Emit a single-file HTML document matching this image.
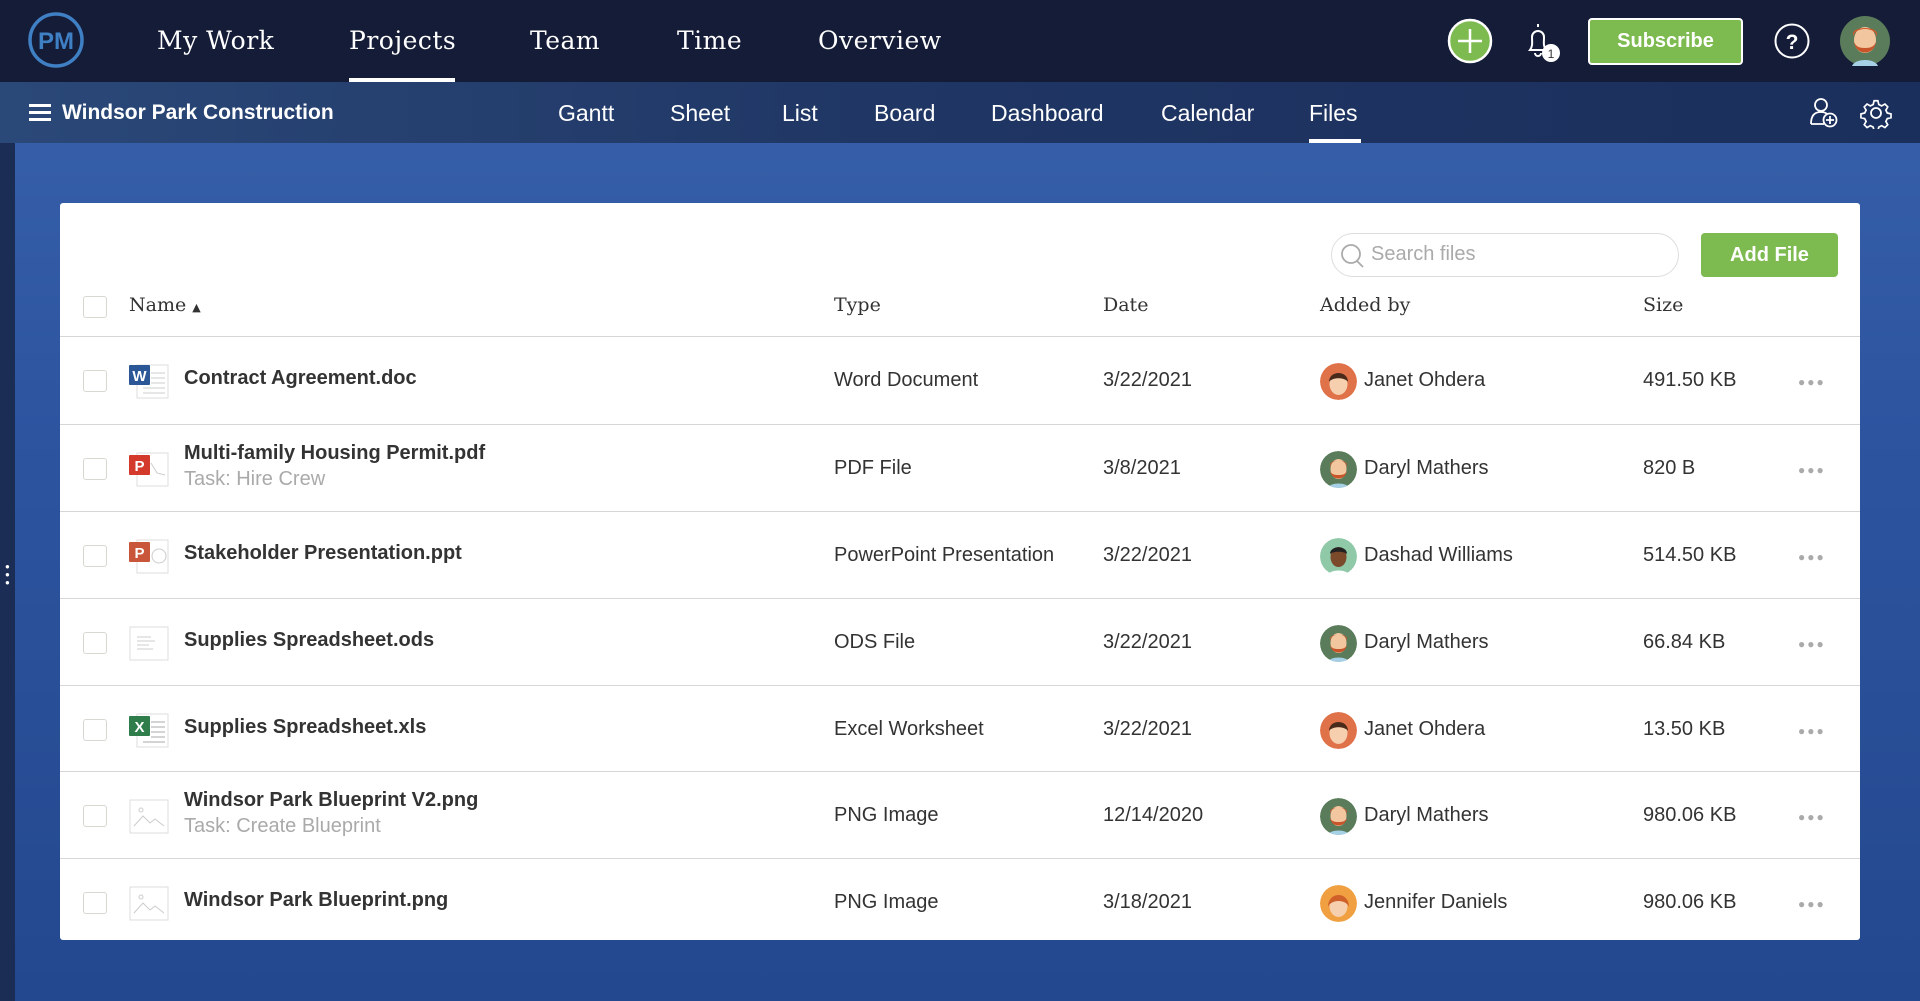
<!DOCTYPE html>
<html><head><meta charset="utf-8"><style>
*{margin:0;padding:0;box-sizing:border-box}
body{width:1920px;height:1001px;overflow:hidden;font-family:"Liberation Sans",sans-serif;background:linear-gradient(180deg,#3b64ad 0%,#2d55a0 40%,#24488f 100%);position:relative}
.top{position:absolute;left:0;top:0;width:1920px;height:82px;background:#141c37}
.sub{position:absolute;left:0;top:82px;width:1920px;height:61px;background:linear-gradient(90deg,#2a4878,#1f3563 50%,#1b2f5c)}
.nav{position:absolute;top:26px;color:#fff;font-family:"DejaVu Serif","Liberation Serif",serif;font-size:25px;letter-spacing:.5px}
.sn{position:absolute;top:100px;color:#fff;font-size:23px}
.card{position:absolute;left:60px;top:203px;width:1800px;height:737px;background:#fff;border-radius:3px}
.hd{position:absolute;top:294px;font-family:"DejaVu Serif","Liberation Serif",serif;font-size:19px;color:#333}
.row{position:absolute;left:60px;width:1800px;height:87px;border-top:1px solid #d6d6d6}
.row div,.row svg{position:absolute}
.cb{left:23px;top:33px;width:24px;height:22px;border:1.5px solid #d8d8d0;border-radius:3px;background:#fff}
.ic{left:69px;top:26px;width:40px;height:36px}
.nm{left:124px;font-weight:bold;font-size:20px;color:#333}
.tk{left:124px;top:50px;font-size:20px;color:#aaa}
.c{font-size:20px;color:#333;top:32px}
.av{left:1260px;top:26px;width:37px;height:37px;border-radius:50%}
.dots{left:1738px;top:38px;color:#aaa;font-size:12px;letter-spacing:2px}
</style></head><body>
<div style="position:absolute;left:0;top:143px;width:15px;height:858px;background:#1b2d55"></div>
<div style="position:absolute;left:5px;top:563px;color:#fff;font-size:8px;line-height:8px">●<br>●<br>●</div>
<div class="top"></div>
<div class="sub"></div>
<svg style="position:absolute;left:27px;top:11px" width="58" height="58"><circle cx="29" cy="29" r="26" fill="none" stroke="#3f7fc4" stroke-width="3.5"/><text x="29" y="38" text-anchor="middle" fill="#3f7fc4" font-family="Liberation Sans" font-weight="bold" font-size="24">PM</text></svg>
<div class="nav" style="left:157px">My Work</div>
<div class="nav" style="left:349px">Projects</div>
<div style="position:absolute;left:349px;top:78px;width:106px;height:4px;background:#fff"></div>
<div class="nav" style="left:530px">Team</div>
<div class="nav" style="left:677px">Time</div>
<div class="nav" style="left:818px">Overview</div>
<svg style="position:absolute;left:1447px;top:18px" width="46" height="46"><circle cx="23" cy="23" r="21" fill="#7dba50" stroke="#fff" stroke-width="2.5"/><path d="M23 11v24M11 23h24" stroke="#fff" stroke-width="2.5"/></svg>
<svg style="position:absolute;left:1520px;top:20px" width="44" height="46"><path d="M18 4v3M10 30c3-4 2-8 2-13a6 6 0 0 1 12 0c0 5-1 9 2 13zM15 33a3 3 0 0 0 6 0" fill="none" stroke="#fff" stroke-width="2"/><circle cx="31" cy="33" r="9" fill="#fff"/><text x="31" y="38" text-anchor="middle" font-size="12" fill="#333" font-family="Liberation Sans">1</text></svg>
<div style="position:absolute;left:1588px;top:18px;width:155px;height:47px;background:#7dba50;border:2.5px solid #fff;border-radius:4px;color:#fff;font-weight:bold;font-size:20px;text-align:center;line-height:42px">Subscribe</div>
<svg style="position:absolute;left:1773px;top:22px" width="38" height="38"><circle cx="19" cy="19" r="16.5" fill="none" stroke="#fff" stroke-width="2"/><text x="19" y="27" text-anchor="middle" fill="#fff" font-weight="bold" font-size="21" font-family="Liberation Sans">?</text></svg>
<svg style="position:absolute;left:1840px;top:16px" width="50" height="50"><circle cx="25" cy="25" r="25" fill="#5a7c5a"/><ellipse cx="25" cy="24" rx="11" ry="13" fill="#f2c7a0"/><path d="M13 22c0-12 24-12 24 0v-4c0-8-24-8-24 0z" fill="#d05a2c"/><path d="M14 26c2 14 20 14 22 0c-2 4-4 6-11 6s-9-2-11-6z" fill="#c8552a"/><path d="M12 50c3-8 23-8 26 0z" fill="#a6d0e6"/></svg>
<div style="position:absolute;left:29px;top:104px;width:22px;height:17px;border-top:3px solid #fff;border-bottom:3px solid #fff"><div style="margin-top:4px;height:3px;background:#fff"></div></div>
<div style="position:absolute;left:62px;top:101px;color:#fff;font-weight:bold;font-size:21px">Windsor Park Construction</div>
<div class="sn" style="left:558px">Gantt</div>
<div class="sn" style="left:670px">Sheet</div>
<div class="sn" style="left:782px">List</div>
<div class="sn" style="left:874px">Board</div>
<div class="sn" style="left:991px">Dashboard</div>
<div class="sn" style="left:1161px">Calendar</div>
<div class="sn" style="left:1309px">Files</div>
<div style="position:absolute;left:1309px;top:139px;width:52px;height:4px;background:#fff"></div>
<svg style="position:absolute;left:1808px;top:96px" width="32" height="34"><circle cx="13" cy="9" r="6" fill="none" stroke="#fff" stroke-width="1.8"/><path d="M3 28c0-8 3-12 10-12 3 0 5 1 6 2M3 28h13" fill="none" stroke="#fff" stroke-width="1.8"/><circle cx="22" cy="24" r="6.5" fill="none" stroke="#fff" stroke-width="1.8"/><path d="M22 20v8M18 24h8" stroke="#fff" stroke-width="1.8"/></svg>
<svg style="position:absolute;left:1860px;top:97px" width="32" height="32"><g fill="none" stroke="#fff" stroke-width="1.8"><circle cx="16" cy="16" r="5"/><path d="M14 3h4l1 4 3 1.5 3.5-2 3 3-2 3.5 1.5 3 4 1v4l-4 1-1.5 3 2 3.5-3 3-3.5-2-3 1.5-1 4h-4l-1-4-3-1.5-3.5 2-3-3 2-3.5-1.5-3-4-1v-4l4-1 1.5-3-2-3.5 3-3 3.5 2 3-1.5z" transform="scale(.94) translate(1 1)"/></g></svg>

<div class="card"></div>
<div style="position:absolute;left:1331px;top:233px;width:348px;height:44px;border:1.5px solid #ddd;border-radius:22px"></div>
<svg style="position:absolute;left:1339px;top:242px" width="28" height="28"><circle cx="12" cy="12" r="9" fill="none" stroke="#aaa" stroke-width="1.8"/><path d="M18 19l6 6" stroke="#aaa" stroke-width="1.8"/></svg>
<div style="position:absolute;left:1371px;top:243px;font-size:20px;color:#aaa">Search files</div>
<div style="position:absolute;left:1701px;top:233px;width:137px;height:44px;background:#7dba50;border-radius:4px;color:#fff;font-weight:bold;font-size:20px;text-align:center;line-height:44px">Add File</div>
<div class="cb" style="position:absolute;left:83px;top:296px"></div>
<div class="hd" style="left:129px">Name <span style="font-size:11px">▲</span></div>
<div class="hd" style="left:834px">Type</div>
<div class="hd" style="left:1103px">Date</div>
<div class="hd" style="left:1320px">Added by</div>
<div class="hd" style="left:1643px">Size</div>

<div class="row" style="top:336px"><div class="cb"></div>
<svg class="ic" viewBox="0 0 40 36"><rect x="8" y="2" width="31" height="33" fill="#fff" stroke="#ddd"/><path d="M22 10h14M22 15h14M22 20h14M14 25h22M14 30h22" stroke="#ccc"/><rect x="0" y="2" width="21" height="20" rx="1" fill="#2b5797"/><text x="10.5" y="18" text-anchor="middle" fill="#fff" font-weight="bold" font-size="15" font-family="Liberation Sans">W</text></svg>
<div class="nm" style="top:30px">Contract Agreement.doc</div><div class="c" style="left:774px">Word Document</div><div class="c" style="left:1043px">3/22/2021</div>
<svg class="av" viewBox="0 0 37 37"><circle cx="18.5" cy="18.5" r="18.5" fill="#e0724a"/><ellipse cx="18.5" cy="21" rx="9" ry="11" fill="#f5cfae"/><path d="M9 19c0-12 19-12 19 0c-3-5-16-5-19 0z" fill="#4a2a1a"/></svg>
<div class="c" style="left:1304px">Janet Ohdera</div><div class="c" style="left:1583px">491.50 KB</div><div class="dots">●●●</div></div>

<div class="row" style="top:424px"><div class="cb"></div>
<svg class="ic" viewBox="0 0 40 36"><rect x="8" y="2" width="31" height="33" fill="#fff" stroke="#ddd"/><path d="M22 12l6 10 8 2" stroke="#ccc" fill="none"/><rect x="0" y="4" width="21" height="20" rx="1" fill="#d33a2c"/><text x="10.5" y="20" text-anchor="middle" fill="#fff" font-weight="bold" font-size="15" font-family="Liberation Sans">P</text></svg>
<div class="nm" style="top:17px">Multi-family Housing Permit.pdf</div><div class="tk" style="top:43px">Task: Hire Crew</div><div class="c" style="left:774px">PDF File</div><div class="c" style="left:1043px">3/8/2021</div>
<svg class="av" viewBox="0 0 37 37"><circle cx="18.5" cy="18.5" r="18.5" fill="#5a7c5a"/><ellipse cx="18.5" cy="18" rx="8" ry="10" fill="#f2c7a0"/><path d="M10 17c0-10 17-10 17 0v-3c0-6-17-6-17 0z" fill="#d05a2c"/><path d="M10 20c2 10 15 10 17 0c-2 3-3 4-8.5 4s-6.5-1-8.5-4z" fill="#c8552a"/><path d="M8 37c2-6 19-6 21 0z" fill="#a6d0e6"/></svg>
<div class="c" style="left:1304px">Daryl Mathers</div><div class="c" style="left:1583px">820 B</div><div class="dots">●●●</div></div>

<div class="row" style="top:511px"><div class="cb"></div>
<svg class="ic" viewBox="0 0 40 36"><rect x="8" y="2" width="31" height="33" fill="#fff" stroke="#ddd"/><circle cx="30" cy="18" r="7" fill="none" stroke="#ccc"/><rect x="0" y="4" width="21" height="20" rx="1" fill="#c9553a"/><text x="10.5" y="20" text-anchor="middle" fill="#fff" font-weight="bold" font-size="15" font-family="Liberation Sans">P</text></svg>
<div class="nm" style="top:30px">Stakeholder Presentation.ppt</div><div class="c" style="left:774px">PowerPoint Presentation</div><div class="c" style="left:1043px">3/22/2021</div>
<svg class="av" viewBox="0 0 37 37"><circle cx="18.5" cy="18.5" r="18.5" fill="#8fc9a8"/><ellipse cx="18.5" cy="19" rx="8" ry="10" fill="#7a4a2a"/><path d="M10 16c0-9 17-9 17 0c-3-3-14-3-17 0z" fill="#222"/><path d="M8 37c2-6 19-6 21 0z" fill="#fff"/></svg>
<div class="c" style="left:1304px">Dashad Williams</div><div class="c" style="left:1583px">514.50 KB</div><div class="dots">●●●</div></div>

<div class="row" style="top:598px"><div class="cb"></div>
<svg class="ic" viewBox="0 0 40 36"><rect x="1" y="2" width="38" height="33" fill="#fff" stroke="#ddd"/><path d="M8 12h14M8 16h18M8 20h12M8 24h16" stroke="#ccc"/></svg>
<div class="nm" style="top:30px">Supplies Spreadsheet.ods</div><div class="c" style="left:774px">ODS File</div><div class="c" style="left:1043px">3/22/2021</div>
<svg class="av" viewBox="0 0 37 37"><circle cx="18.5" cy="18.5" r="18.5" fill="#5a7c5a"/><ellipse cx="18.5" cy="18" rx="8" ry="10" fill="#f2c7a0"/><path d="M10 17c0-10 17-10 17 0v-3c0-6-17-6-17 0z" fill="#d05a2c"/><path d="M10 20c2 10 15 10 17 0c-2 3-3 4-8.5 4s-6.5-1-8.5-4z" fill="#c8552a"/><path d="M8 37c2-6 19-6 21 0z" fill="#a6d0e6"/></svg>
<div class="c" style="left:1304px">Daryl Mathers</div><div class="c" style="left:1583px">66.84 KB</div><div class="dots">●●●</div></div>

<div class="row" style="top:685px"><div class="cb"></div>
<svg class="ic" viewBox="0 0 40 36"><rect x="8" y="2" width="31" height="33" fill="#fff" stroke="#ddd"/><path d="M22 10h14M22 15h14M22 20h14M22 25h14M14 30h22" stroke="#aaa"/><rect x="0" y="4" width="21" height="20" rx="1" fill="#2e7d4a"/><text x="10.5" y="20" text-anchor="middle" fill="#fff" font-weight="bold" font-size="15" font-family="Liberation Sans">X</text></svg>
<div class="nm" style="top:30px">Supplies Spreadsheet.xls</div><div class="c" style="left:774px">Excel Worksheet</div><div class="c" style="left:1043px">3/22/2021</div>
<svg class="av" viewBox="0 0 37 37"><circle cx="18.5" cy="18.5" r="18.5" fill="#e0724a"/><ellipse cx="18.5" cy="21" rx="9" ry="11" fill="#f5cfae"/><path d="M9 19c0-12 19-12 19 0c-3-5-16-5-19 0z" fill="#4a2a1a"/></svg>
<div class="c" style="left:1304px">Janet Ohdera</div><div class="c" style="left:1583px">13.50 KB</div><div class="dots">●●●</div></div>

<div class="row" style="top:771px"><div class="cb"></div>
<svg class="ic" viewBox="0 0 40 36"><rect x="1" y="2" width="38" height="33" fill="#fff" stroke="#ddd"/><path d="M5 28l9-10 7 7 5-4 9 7" stroke="#ccc" fill="none"/><circle cx="12" cy="12" r="2" fill="none" stroke="#ccc"/></svg>
<div class="nm" style="top:17px">Windsor Park Blueprint V2.png</div><div class="tk" style="top:43px">Task: Create Blueprint</div><div class="c" style="left:774px">PNG Image</div><div class="c" style="left:1043px">12/14/2020</div>
<svg class="av" viewBox="0 0 37 37"><circle cx="18.5" cy="18.5" r="18.5" fill="#5a7c5a"/><ellipse cx="18.5" cy="18" rx="8" ry="10" fill="#f2c7a0"/><path d="M10 17c0-10 17-10 17 0v-3c0-6-17-6-17 0z" fill="#d05a2c"/><path d="M10 20c2 10 15 10 17 0c-2 3-3 4-8.5 4s-6.5-1-8.5-4z" fill="#c8552a"/><path d="M8 37c2-6 19-6 21 0z" fill="#a6d0e6"/></svg>
<div class="c" style="left:1304px">Daryl Mathers</div><div class="c" style="left:1583px">980.06 KB</div><div class="dots">●●●</div></div>

<div class="row" style="top:858px;height:82px"><div class="cb"></div>
<svg class="ic" viewBox="0 0 40 36"><rect x="1" y="2" width="38" height="33" fill="#fff" stroke="#ddd"/><path d="M5 28l9-10 7 7 5-4 9 7" stroke="#ccc" fill="none"/><circle cx="12" cy="12" r="2" fill="none" stroke="#ccc"/></svg>
<div class="nm" style="top:30px">Windsor Park Blueprint.png</div><div class="c" style="left:774px">PNG Image</div><div class="c" style="left:1043px">3/18/2021</div>
<svg class="av" viewBox="0 0 37 37"><circle cx="18.5" cy="18.5" r="18.5" fill="#f0a040"/><ellipse cx="18.5" cy="21" rx="9" ry="11" fill="#f5cfae"/><path d="M8 22c0-16 21-16 21 0c-3-8-18-8-21 0z" fill="#d0602a"/></svg>
<div class="c" style="left:1304px">Jennifer Daniels</div><div class="c" style="left:1583px">980.06 KB</div><div class="dots">●●●</div></div>
</body></html>
